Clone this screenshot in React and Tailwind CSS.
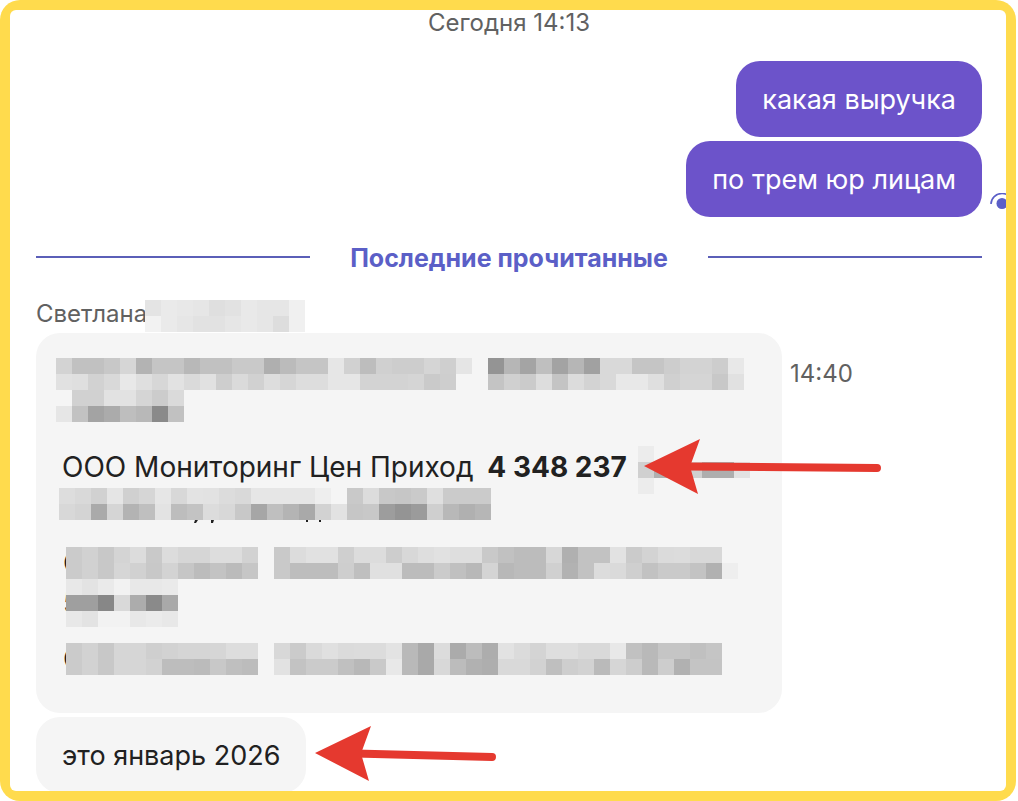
import clsx from 'clsx'

// Every pair of characters is the grey level of one tile, '..' leaves a hole
const MOSAICS = {
	surname: [
		'e4 ea e8 e6 df e2 e9 e6 e6 f0',
		'f2 ea e6 e2 e2 e6 e9 e6 dd f0',
	],
	intro: [
		'd3 c1 c1 c8 d6 b3 c5 c5 b8 c1 c1 c9 c9 af bb c5 c5 e6 d1 bd d0 cd cd d5 cf e5 .. 94 b6 a4 bf a3 b6 a1 d9 d9 c5 c5 cd d3 d3 cd e8',
		'e1 df d2 d9 e8 df d7 e2 da e1 ce da d1 dd d6 dd dd e6 e6 d3 d3 d3 d5 ca ce .. .. c4 d0 cb dd c4 dc d3 d9 e8 e8 df d0 d5 d5 c8 e1',
		'.. d1 d1 e2 e2 d5 cc da',
		'e6 c2 a3 ab be b8 8a c1',
	],
	amount: ['ec', 'd0 b0 b8 d0 ae ae e2', 'ec'],
	expense: [
		'dd d9 d1 e5 d0 d6 e6 d8 e3 e2 dc d9 e6 e6 e6 e6 ee f5 c9 dc c8 c6 ca df cb cb cb',
		'd8 d4 aa d5 b3 bf e3 bd c3 dc d8 c8 a6 bf b4 a9 d2 e2 c6 c8 9d 94 9b cf b8 b0 b6',
	],
	second: [
		'cb d1 c8 d4 dc c9 dc d6 d6 dd dd d2 .. c9 dc e1 e1 cf dc dc cd d8 de e1 de de c9 c1 bc bc d7 b0 c2 c2 e2 cb d3 db dc d8 d8',
		'cb d1 c8 d6 d1 c8 d3 c6 bc c3 bb c6 .. c9 bd bd bd ce bf e0 e0 bc bc cb c0 b8 d4 b8 bc bc d0 b2 c2 dc da cf c2 ca ca c3 b1 ee',
	],
	secondAmount: [
		'e8 e3 ea f2 e8 e8 ea',
		'9f 9f 87 d9 ac 8a a9',
		'e8 e3 f2 f2 e8 eb e8',
	],
	third: [
		'cb d2 c8 d6 d6 cf d2 d5 d5 d6 dd dd .. d8 cb da e0 db dc dc e3 b9 a9 dc ab bc ad e2 db d4 de de d9 d9 e8 c1 b9 c5 c5 c0 c5',
		'cb d2 c8 d6 d6 d2 bd bd bb c8 bf bc .. e2 c3 cb cb c0 b8 c9 e8 b9 a9 d8 bc b1 ae d9 d9 d2 bf ce d2 ba d6 cd b9 cd b1 c4 c4',
	],
}

const Mosaic = ({ rows, className = 'relative' }) => (
	<div aria-hidden="true" className={clsx('shrink-0', className)}>
		{rows.map((row, i) => (
			<div key={i} className="flex h-4">
				{row.split(' ').map((level, j) => (
					<span
						key={j}
						className="size-4 shrink-0"
						style={{
							backgroundColor:
								level === '..'
									? 'transparent'
									: `#${level}${level}${level}`,
						}}
					/>
				))}
			</div>
		))}
	</div>
)

const Bubble = ({ own, children }) => (
	<div
		className={clsx(
			'w-fit rounded-3xl px-[26px] pt-[19px] pb-[17px] text-[27px] leading-10',
			own ? 'bg-[#6c53ca] text-white' : 'bg-[#f5f5f5] text-[#212121]',
		)}
	>
		{children}
	</div>
)

const SeenIcon = () => (
	<svg
		aria-hidden="true"
		viewBox="0 0 24 24"
		className="absolute bottom-0 left-full ml-2 size-6"
	>
		<path
			d="M1 11a11 10.500 0 0 1 22 0"
			fill="none"
			stroke="#5b5fc7"
			strokeWidth="1.600"
		/>
		<circle cx="12" cy="10.500" r="5.500" fill="#5b5fc7" />
	</svg>
)

const Arrow = ({ className, width, tail }) => (
	<svg
		aria-hidden="true"
		viewBox={`0 0 ${width} 56`}
		className={clsx('absolute', className)}
	>
		<path d={`M40 27.500L${width - 5} ${tail}`} stroke="#e5392f" strokeWidth="8" strokeLinecap="round" />
		<path d="M0 27L56 0L46 27.500L54 55Z" fill="#e5392f" />
	</svg>
)

const Divider = ({ children }) => (
	<div className="mt-[23px] flex items-center gap-10 text-[25px] leading-8 font-bold text-[#5b5fc7]">
		<span className="h-[2px] flex-1 bg-[#5b5fb8]" />
		<h2 className="pt-[2px]">{children}</h2>
		<span className="h-[2px] flex-1 bg-[#5b5fb8]" />
	</div>
)

// The mosaic next to it paints over the letter, only its left edge shows
const Covered = ({ children }) => (
	<span className="w-[3px] shrink-0">{children}</span>
)

export default function App() {
	return (
		<div className="bg-white pr-[2px]">
			<main className="h-screen overflow-hidden rounded-[20px] bg-[#ffdb4d] p-[10px] font-['Inter',sans-serif]">
				<div className="h-full overflow-hidden rounded-md bg-white pr-6 pl-[26px]">
					<p className="text-center text-[24px] leading-[26px] text-[#616161]">
						Сегодня 14:13
					</p>

					<section className="relative mt-[25px] flex flex-col items-end gap-1">
						<Bubble own>какая выручка</Bubble>
						<Bubble own>по трем юр лицам</Bubble>
						<SeenIcon />
					</section>

					<Divider>Последние прочитанные</Divider>

					<section>
						<div className="mt-[26px] flex h-8 text-[24px] leading-7 text-[#616161]">
							<span className="w-[109px] whitespace-nowrap">Светлана</span>
							<Mosaic rows={MOSAICS.surname} />
						</div>

						<div className="mt-px flex items-start gap-2">
							<article className="h-[380px] w-[746px] rounded-3xl bg-[#f5f5f5] pt-[25px] pl-5 text-[28px] leading-10 text-[#212121]">
								<Mosaic rows={MOSAICS.intro} />
								<div className="relative mt-6 flex h-12 pl-[6px]">
									<p className="pt-px whitespace-nowrap">
										ООО Мониторинг Цен Приход{' '}
										<strong className="ml-1.5">4 348 237</strong>
									</p>
									<Mosaic
										rows={MOSAICS.amount}
										className="absolute left-[582px]"
									/>
									<Arrow
										width={238}
										tail={29}
										className="-top-[7px] left-[588px] h-14 w-[238px]"
									/>
								</div>
								<div className="mt-[-6px] pl-[3px]">
									<Mosaic rows={MOSAICS.expense} />
									<svg aria-hidden="true" viewBox="0 0 432 6" className="h-[6px] w-[432px]">
										<path
											d="M136 0h3l-2 3h-2zM152 0h3l-1 3h-2zM247 0h2v2h-2zM260 0h2v2h-2z"
											fill="#212121"
										/>
									</svg>
								</div>
								<div className="mt-[21px] pl-[7px]">
									<div className="flex h-8 leading-8">
										<Covered>О</Covered>
										<Mosaic rows={MOSAICS.second} />
									</div>
									<div className="flex h-12 leading-[48px]">
										<Covered>5</Covered>
										<Mosaic rows={MOSAICS.secondAmount} />
									</div>
								</div>
								<div className="mt-4 flex h-8 pl-[7px] leading-8">
									<Covered>О</Covered>
									<Mosaic rows={MOSAICS.third} />
								</div>
							</article>
							<time className="mt-[25px] text-[24px] leading-8 text-[#616161]">
								14:40
							</time>
						</div>

						<div className="relative mt-1 w-fit">
							<Bubble>это январь 2026</Bubble>
							<Arrow
								width={182}
								tail={31}
								className="top-[9px] left-full ml-[9px] h-14 w-[182px]"
							/>
						</div>
					</section>
				</div>
			</main>
		</div>
	)
}
